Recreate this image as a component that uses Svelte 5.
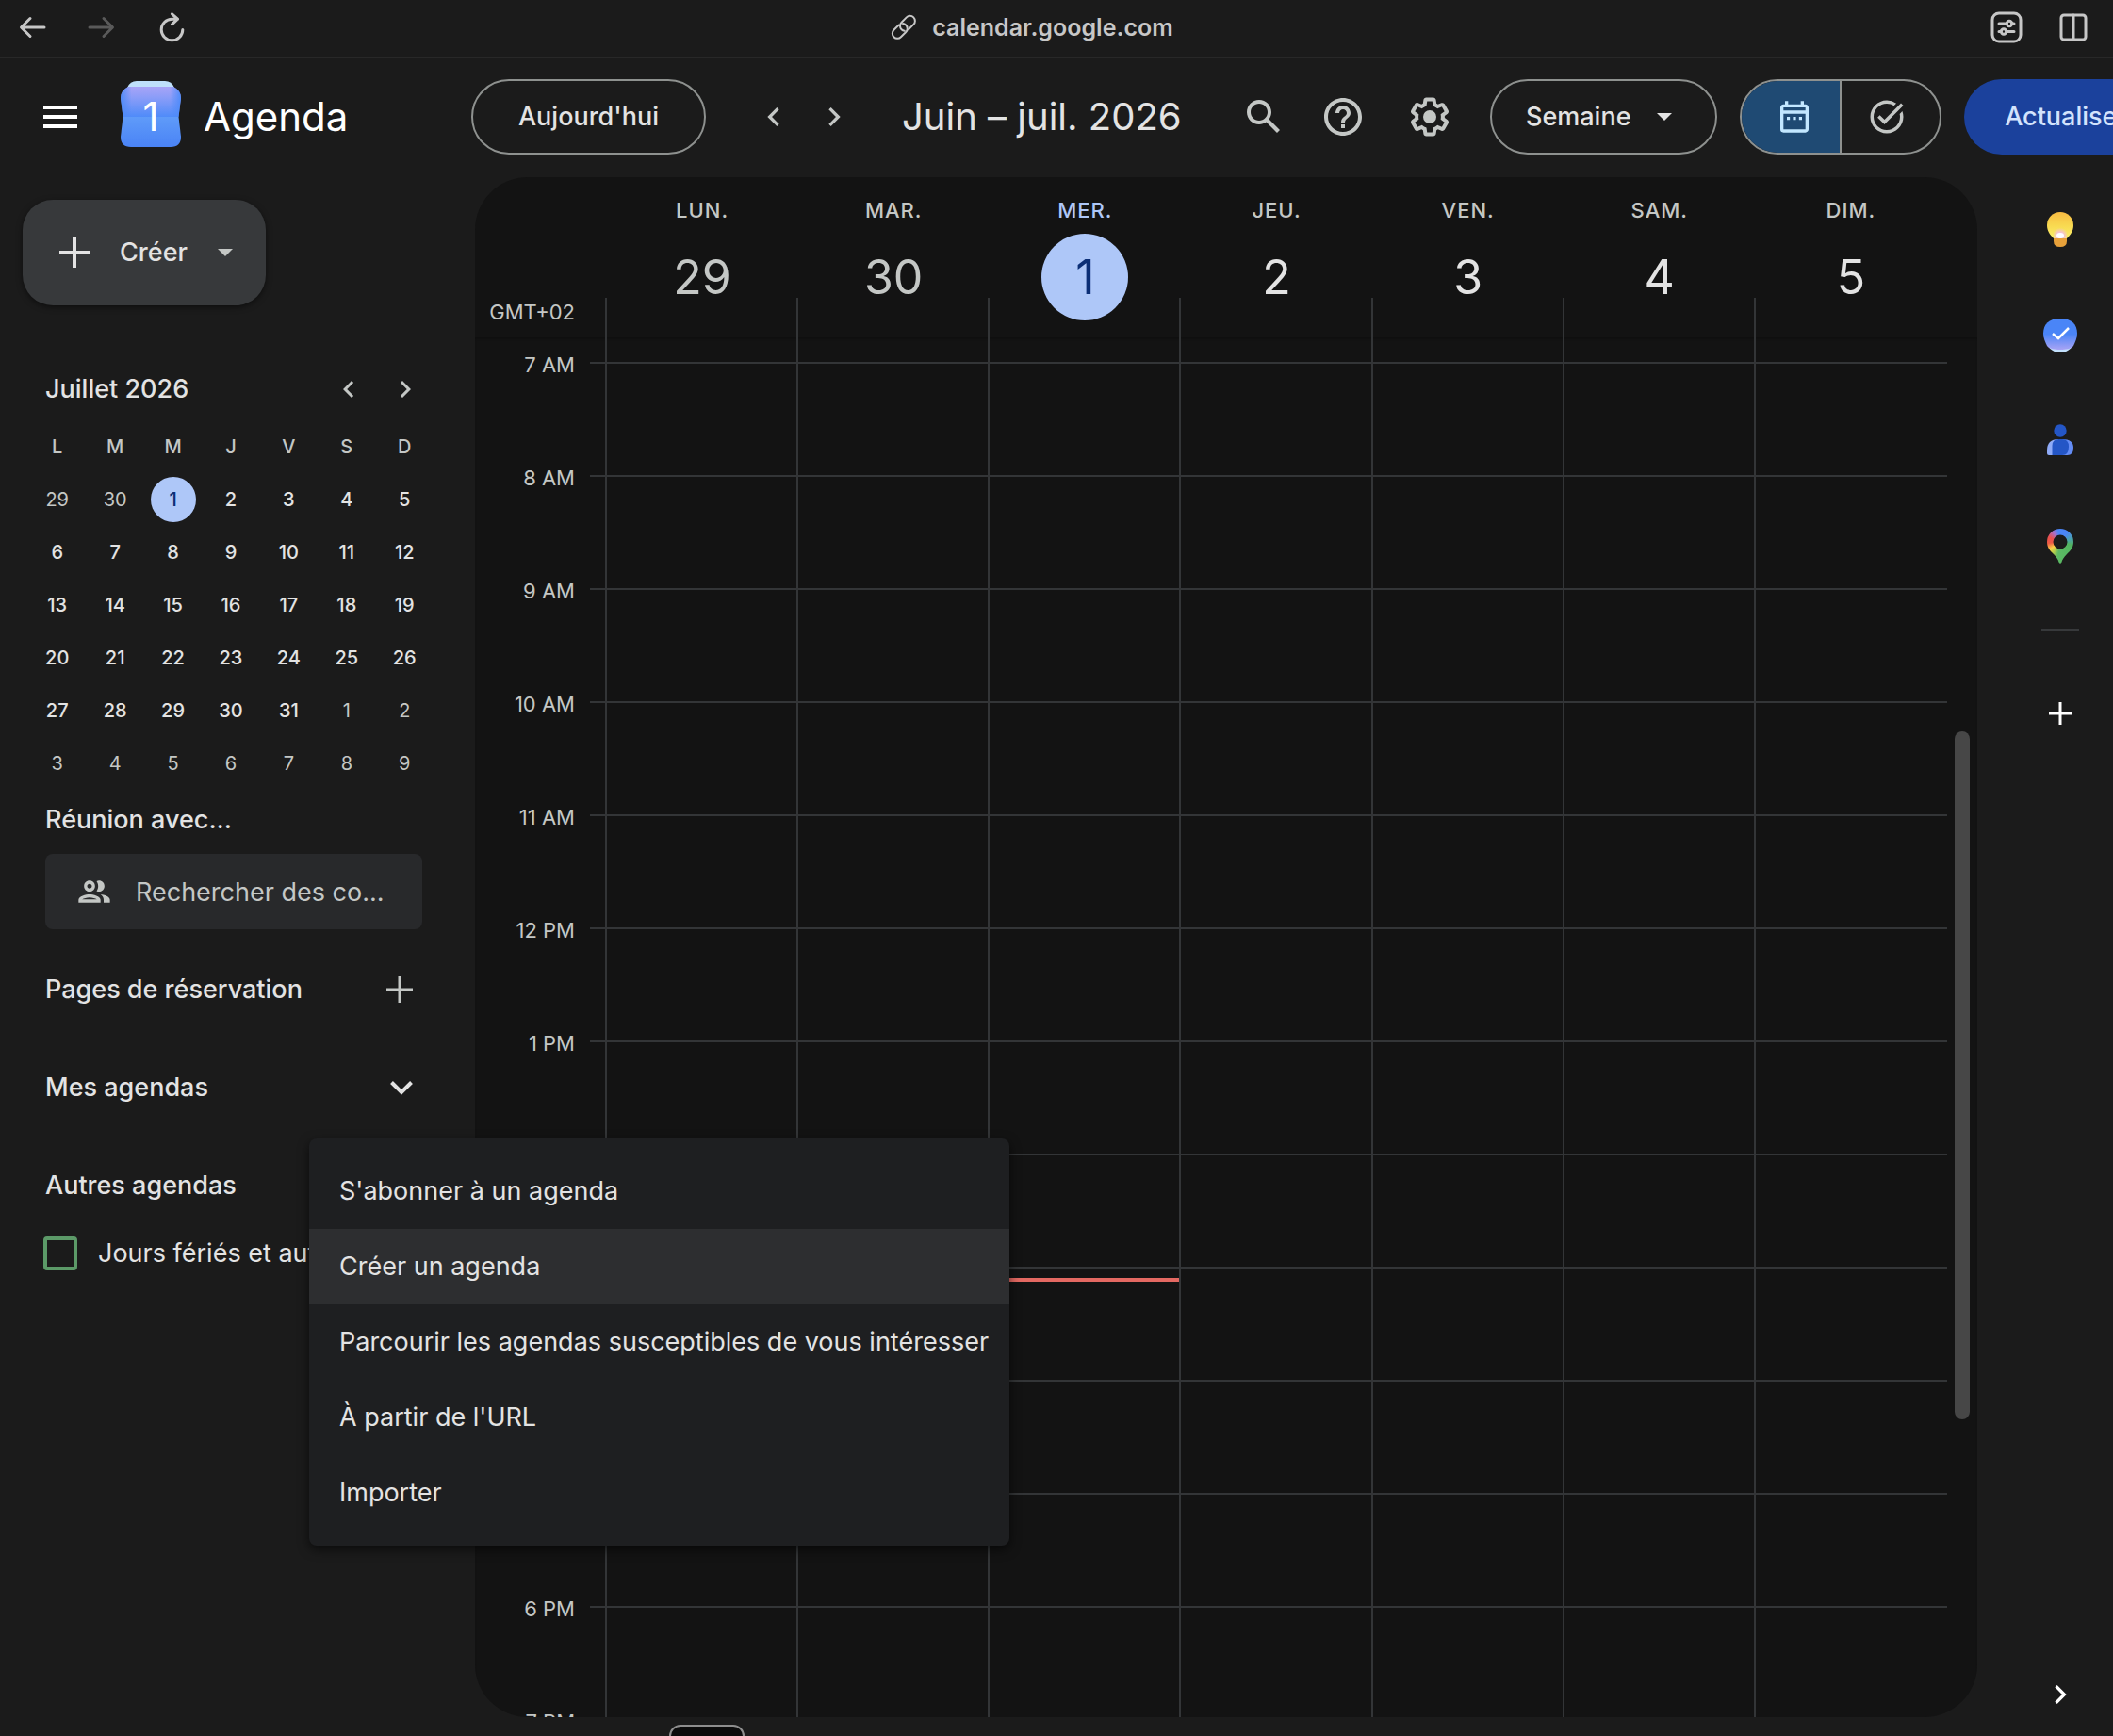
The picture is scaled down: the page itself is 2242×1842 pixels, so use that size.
<script>
  const days = [
    { name: 'LUN.', num: 29, past: true },
    { name: 'MAR.', num: 30, past: true },
    { name: 'MER.', num: 1, today: true },
    { name: 'JEU.', num: 2 },
    { name: 'VEN.', num: 3 },
    { name: 'SAM.', num: 4 },
    { name: 'DIM.', num: 5 }
  ];
  const hours = ['7 AM', '8 AM', '9 AM', '10 AM', '11 AM', '12 PM', '1 PM', '2 PM', '3 PM', '4 PM', '5 PM', '6 PM', '7 PM'];
  const letters = ['L', 'M', 'M', 'J', 'V', 'S', 'D'];
  // Six weeks starting on Monday 29 June 2026
  const weeks = Array.from({ length: 6 }, (_, w) =>
    Array.from({ length: 7 }, (_, d) => {
      const n = w * 7 + d - 1;
      if (n < 1) return { n: n + 30, out: true };
      if (n > 31) return { n: n - 31, out: true };
      return { n, out: false, today: n === 1 };
    })
  );
  const menu = [
    "S'abonner à un agenda",
    'Créer un agenda',
    'Parcourir les agendas susceptibles de vous intéresser',
    "À partir de l'URL",
    'Importer'
  ];
  let active = $state(1);
  let view = $state('Semaine');
  let holidays = $state(false);
</script>

<div class="app">
  <div class="browser">
    <div class="tools">
      <button aria-label="Page précédente"><svg width="32" height="32" viewBox="0 0 32 32"><path d="M29 16H5M14 6.5L4.500 16 14 25.500" /></svg></button>
      <button class="off" aria-label="Page suivante"><svg width="32" height="32" viewBox="0 0 32 32"><path d="M3 16h24M18 6.500L27.500 16 18 25.500" /></svg></button>
      <button aria-label="Recharger"><svg width="32" height="32" viewBox="0 0 32 32"><path d="M27.800 18.500A11.300 11.300 0 1 1 16.500 7.200h6M16.500 1.800l6 5.400-6 5.600" /></svg></button>
    </div>
    <div class="address">
      <svg width="28" height="28" viewBox="0 0 28 28"><g transform="rotate(-45 14 14)"><path d="M12 8.500H4.500a5.300 5.300 0 0 0 0 10.600h7.500a5.300 5.300 0 0 0 5.300-5.300 5.300 5.300 0 0 0-1.200-3.300" /><path d="M16 19.100h7.500a5.300 5.300 0 0 0 0-10.600H16a5.300 5.300 0 0 0-5.300 5.300 5.300 5.300 0 0 0 1.200 3.300" /></g></svg>
      <span>calendar.google.com</span>
    </div>
    <div class="tools end">
      <button aria-label="Réglages du site"><svg width="34" height="34" viewBox="0 0 34 34"><rect x="2" y="2" width="30" height="30" rx="7" /><path d="M9 13h8M23 13h2M9 21.500h2M17 21.500h8" /><circle cx="20" cy="13" r="2.700" /><circle cx="14" cy="21.500" r="2.700" /></svg></button>
      <button aria-label="Vue partagée"><svg width="34" height="34" viewBox="0 0 34 34"><rect x="3" y="4" width="26" height="26" rx="3" /><path d="M16 4v26" /></svg></button>
    </div>
  </div>

  <header>
    <div class="brand">
      <button class="burger" aria-label="Menu principal"><svg width="48" height="48" viewBox="0 0 24 24"><path fill="currentColor" d="M3 18h18v-2H3v2zm0-5h18v-2H3v2zm0-7v2h18V6H3z" /></svg></button>
      <div class="logo">
        <svg width="66" height="72" viewBox="0 0 66 72">
          <defs>
            <linearGradient id="lg-top" x1="0" y1="0" x2="0" y2="1"><stop offset="0" stop-color="#a9a4f7" /><stop offset=".35" stop-color="#8b9df8" /><stop offset="1" stop-color="#4f8bf9" /></linearGradient>
            <linearGradient id="lg-side" x1="0" y1="0" x2="1" y2="0"><stop offset="0" stop-color="#4f8bf9" /><stop offset=".18" stop-color="#4f8bf9" stop-opacity="0" /><stop offset=".82" stop-color="#4f8bf9" stop-opacity="0" /><stop offset="1" stop-color="#4f8bf9" /></linearGradient>
            <linearGradient id="lg-bot" x1="0" y1="0" x2="0" y2="1"><stop offset="0" stop-color="#5f9bf9" /><stop offset="1" stop-color="#4a83f6" /></linearGradient>
          </defs>
          <path fill="#bfe0fb" d="M18 1h30q7 0 10 7v4H8V8q3-7 10-7z" />
          <path fill="url(#lg-top)" d="M9 7h48q8 4 8 12L62.500 39h-59L1 19Q1 11 9 7z" />
          <path fill="url(#lg-side)" d="M9 7h48q8 4 8 12L62.500 39h-59L1 19Q1 11 9 7z" />
          <path fill="url(#lg-bot)" d="M3.500 39h59L65 60q0 11-11 11H12Q1 71 1 60z" />
        </svg>
        <span>1</span>
      </div>
      <span class="name">Agenda</span>
    </div>
    <button class="pill today">Aujourd'hui</button>
    <div class="nav">
      <button aria-label="Semaine précédente"><svg width="40" height="40" viewBox="0 0 24 24"><path fill="currentColor" d="M15.410 7.410L14 6l-6 6 6 6 1.410-1.410L10.830 12z" /></svg></button>
      <button aria-label="Semaine suivante"><svg width="40" height="40" viewBox="0 0 24 24"><path fill="currentColor" d="M10 6L8.590 7.410 13.170 12l-4.580 4.590L10 18l6-6z" /></svg></button>
    </div>
    <h1>Juin – juil. 2026</h1>
    <div class="icons">
      <button aria-label="Rechercher"><svg width="48" height="48" viewBox="0 0 24 24"><path fill="currentColor" d="M20.490 19l-5.730-5.730C15.530 12.200 16 10.910 16 9.500 16 5.910 13.090 3 9.500 3S3 5.910 3 9.500 5.910 16 9.500 16c1.410 0 2.700-.47 3.770-1.240L19 20.490 20.490 19zM5 9.500C5 7.010 7.010 5 9.500 5S14 7.010 14 9.500 11.990 14 9.500 14 5 11.990 5 9.500z" /></svg></button>
      <button aria-label="Aide"><svg width="48" height="48" viewBox="0 0 24 24"><path fill="currentColor" d="M11 18h2v-2h-2v2zm1-16C6.480 2 2 6.480 2 12s4.480 10 10 10 10-4.480 10-10S17.520 2 12 2zm0 18c-4.410 0-8-3.590-8-8s3.590-8 8-8 8 3.590 8 8-3.590 8-8 8zm0-14c-2.210 0-4 1.790-4 4h2c0-1.100.9-2 2-2s2 .9 2 2c0 2-3 1.750-3 5h2c0-2.250 3-2.500 3-5 0-2.210-1.790-4-4-4z" /></svg></button>
      <button class="gear" aria-label="Paramètres"><svg width="48" height="48" viewBox="0 0 24 24"><path fill="currentColor" d="M13.850 22.250h-3.700c-.74 0-1.360-.54-1.450-1.270l-.27-1.890c-.27-.14-.53-.29-.79-.46l-1.800.72c-.7.26-1.470-.03-1.810-.65L2.200 15.530c-.35-.66-.2-1.440.36-1.880l1.530-1.190c-.01-.15-.02-.3-.02-.46 0-.15.01-.31.020-.46l-1.520-1.190c-.59-.45-.74-1.260-.37-1.880l1.850-3.190c.34-.62 1.110-.9 1.790-.63l1.810.73c.26-.17.52-.32.780-.46l.27-1.910c.09-.7.710-1.250 1.440-1.250h3.700c.74 0 1.360.54 1.450 1.270l.27 1.890c.27.14.53.29.79.46l1.800-.72c.71-.26 1.480.03 1.820.65l1.840 3.180c.36.66.2 1.440-.36 1.880l-1.520 1.190c.01.15.020.3.020.46s-.01.31-.02.46l1.520 1.190c.56.45.72 1.230.37 1.860l-1.860 3.220c-.34.62-1.110.9-1.800.63l-1.800-.72c-.26.17-.52.32-.78.46l-.27 1.910c-.1.680-.72 1.220-1.460 1.220zm-3.230-2h2.760l.37-2.550.53-.22c.44-.18.88-.44 1.340-.78l.45-.34 2.380.96 1.380-2.400-2.030-1.580.07-.56c.03-.26.060-.51.060-.78s-.03-.53-.06-.78l-.07-.56 2.030-1.580-1.390-2.400-2.390.96-.45-.35c-.42-.32-.87-.58-1.330-.77l-.52-.22-.37-2.550h-2.760l-.37 2.550-.53.210c-.44.190-.88.440-1.340.79l-.45.330-2.380-.95-1.390 2.390 2.030 1.580-.07.56a7 7 0 0 0-.06.79c0 .26.020.53.060.78l.07.56-2.030 1.580 1.380 2.400 2.390-.96.45.35c.43.33.86.58 1.330.77l.53.220.38 2.550z" /><circle fill="currentColor" cx="12" cy="12" r="3.500" /></svg></button>
    </div>
    <div class="pill view">
      <select aria-label="Affichage" bind:value={view}>
        <option>Jour</option><option>Semaine</option><option>Mois</option>
      </select>
      <svg width="16" height="10" viewBox="0 0 16 10"><path fill="currentColor" d="M0 1h16L8 9z" /></svg>
    </div>
    <div class="pill switch">
      <button class="on" aria-label="Agenda"><svg width="40" height="40" viewBox="0 0 24 24"><path fill="currentColor" d="M19 4h-1V2h-2v2H8V2H6v2H5c-1.110 0-1.990.9-1.990 2L3 20a2 2 0 0 0 2 2h14c1.100 0 2-.9 2-2V6c0-1.100-.9-2-2-2zm0 16H5V10h14v10zm0-12H5V6h14v2z" /><path fill="currentColor" d="M7.200 12h1.900v1.900H7.200zM11.050 12h1.900v1.900h-1.900zM14.900 12h1.900v1.900h-1.900z" /></svg></button>
      <button class="tasks" aria-label="Tâches"><svg width="42" height="42" viewBox="0 0 24 24"><path fill="currentColor" d="M22 5.180L10.590 16.600l-4.240-4.240 1.410-1.410 2.830 2.830 10-10L22 5.180zm-2.210 5.040c.13.570.21 1.170.21 1.780 0 4.420-3.580 8-8 8s-8-3.580-8-8 3.580-8 8-8c1.580 0 3.040.46 4.280 1.250l1.440-1.440A9.900 9.900 0 0 0 12 2C6.480 2 2 6.480 2 12s4.480 10 10 10 10-4.480 10-10c0-1.190-.22-2.330-.6-3.390l-1.610 1.610z" /></svg></button>
    </div>
    <button class="upgrade">Actualiser</button>
  </header>

  <div class="body">
    <aside>
      <button class="create">
        <svg width="32" height="32" viewBox="0 0 32 32"><path fill="currentColor" d="M14 0h4v14h14v4H18v14h-4V18H0v-4h14z" /></svg>
        <span>Créer</span>
        <svg class="caret" width="16" height="10" viewBox="0 0 16 10"><path fill="currentColor" d="M0 1h16L8 9z" /></svg>
      </button>

      <section class="mini">
        <div class="row">
          <h2>Juillet 2026</h2>
          <div class="arrows">
            <button aria-label="Mois précédent"><svg width="36" height="36" viewBox="0 0 24 24"><path fill="currentColor" d="M15.410 7.410L14 6l-6 6 6 6 1.410-1.410L10.830 12z" /></svg></button>
            <button aria-label="Mois suivant"><svg width="36" height="36" viewBox="0 0 24 24"><path fill="currentColor" d="M10 6L8.590 7.410 13.170 12l-4.580 4.590L10 18l6-6z" /></svg></button>
          </div>
        </div>
        <table>
          <thead><tr>{#each letters as l}<th>{l}</th>{/each}</tr></thead>
          <tbody>
            {#each weeks as week}
              <tr>{#each week as d}<td><button class:out={d.out} class:now={d.today}>{d.n}</button></td>{/each}</tr>
            {/each}
          </tbody>
        </table>
      </section>

      <label class="meet" for="people">Réunion avec...</label>
      <div class="people">
        <svg width="40" height="40" viewBox="0 0 24 24"><path fill="currentColor" d="M9 12c1.930 0 3.500-1.570 3.500-3.500S10.930 5 9 5 5.500 6.570 5.500 8.500 7.070 12 9 12zm0-5c.83 0 1.500.67 1.500 1.500S9.830 10 9 10s-1.500-.67-1.500-1.500S8.170 7 9 7zm0 6.750c-2.340 0-7 1.170-7 3.500V19h14v-1.750c0-2.330-4.660-3.500-7-3.500zM4.340 17c.84-.58 2.870-1.250 4.660-1.250s3.820.67 4.660 1.250H4.340zm11.700-3.190c1.160.84 1.960 1.960 1.960 3.440V19h4v-1.750c0-2.020-3.500-3.170-5.960-3.440zM15 12c1.930 0 3.500-1.570 3.500-3.500S16.930 5 15 5c-.54 0-1.040.13-1.500.35.630.89 1 1.980 1 3.150s-.37 2.260-1 3.150c.46.220.96.350 1.500.350z" /></svg>
        <input id="people" type="text" placeholder="Rechercher des co..." />
      </div>

      <div class="row group">
        <h2>Pages de réservation</h2>
        <button class="dim" aria-label="Ajouter une page"><svg width="28" height="28" viewBox="0 0 28 28"><path fill="currentColor" d="M12.500 0h3v12.500H28v3H15.500V28h-3V15.500H0v-3h12.500z" /></svg></button>
      </div>
      <div class="row group">
        <h2>Mes agendas</h2>
        <button aria-label="Développer"><svg width="24" height="24" viewBox="0 0 24 24"><path d="M1.500 6.500L12 17 22.500 6.500" fill="none" stroke="currentColor" stroke-width="4" /></svg></button>
      </div>
      <div class="others">
        <div class="row group"><h2>Autres agendas</h2></div>
        <label class="check"><input type="checkbox" bind:checked={holidays} /><span>Jours fériés et autres fêtes</span></label>
        <div class="menu" role="menu">
          {#each menu as item, i}
            <button role="menuitem" class:active={active === i} onmouseenter={() => (active = i)}>{item}</button>
          {/each}
        </div>
      </div>
    </aside>

    <main>
      <div class="head">
        <div class="zone">GMT+02</div>
        {#each days as d}
          <div class="day" class:past={d.past} class:current={d.today}>
            <span class="dow">{d.name}</span>
            <button>{d.num}</button>
          </div>
        {/each}
      </div>
      <div class="scroll">
        <div class="grid">
          <div class="hours">
            {#each hours as h}<div><span>{h}</span></div>{/each}
          </div>
          {#each days as d}
            <div class="col">
              {#each hours as h}<div class="cell"></div>{/each}
              {#if d.today}<div class="nowline"></div>{/if}
            </div>
          {/each}
        </div>
      </div>
      <div class="thumb"></div>
    </main>

    <nav class="rail">
      <button aria-label="Keep"><svg width="40" height="40" viewBox="0 0 40 40">
        <defs>
          <linearGradient id="kp" x1="0" y1="0" x2="0" y2="1"><stop offset="0" stop-color="#f8bb42" /><stop offset=".5" stop-color="#f8d850" /><stop offset="1" stop-color="#faf06a" /></linearGradient>
          <radialGradient id="kg" cx=".5" cy=".8" r=".6"><stop offset="0" stop-color="#fff" /><stop offset=".4" stop-color="#f3bde0" /><stop offset="1" stop-color="#f3bde0" stop-opacity="0" /></radialGradient>
        </defs>
        <path fill="#e8a13a" d="M13 27h14v5q0 6-7 6t-7-6z" />
        <path fill="url(#kp)" d="M20 1a14 14 0 0 1 14 14c0 6-3 10-7 14H13C9 25 6 21 6 15A14 14 0 0 1 20 1z" />
        <path fill="url(#kg)" d="M13 15h14v14H13z" />
        <ellipse cx="20" cy="26" rx="4" ry="3" fill="#fff" />
      </svg></button>
      <button aria-label="Tasks"><svg width="40" height="40" viewBox="0 0 40 40">
        <defs><linearGradient id="tk" x1="0" y1="0" x2="0" y2="1"><stop offset=".5" stop-color="#4a85f7" /><stop offset="1" stop-color="#a9a4f5" /></linearGradient></defs>
        <path fill="#c2e0fc" d="M4 22h32c-1 10-7 16-16 16S5 32 4 22z" />
        <path fill="url(#tk)" d="M20 2c12 0 18 6 18 16 0 4-2 9-4 13-2 3-8 4-14 4S8 34 6 31C4 27 2 22 2 18 2 8 8 2 20 2z" />
        <path d="M12 18l6 5 11-11" fill="none" stroke="#fff" stroke-width="2.500" />
      </svg></button>
      <button aria-label="Contacts"><svg width="40" height="40" viewBox="0 0 40 40">
        <circle cx="20" cy="9" r="6.700" fill="#2456c6" />
        <path fill="#8fabf7" d="M6 30q0-12 12-12v17H8q-2 0-2-2z" />
        <path fill="#638cf5" d="M22 18q12 0 12 9t-8 8h-4z" />
        <path fill="#2456c6" d="M11.500 35V25q0-7 7-7h3.500q7 0 7 8 0 9-7 9z" />
      </svg></button>
      <button aria-label="Maps">
        <span class="pin"></span>
      </button>
      <hr />
      <button aria-label="Modules complémentaires"><svg width="24" height="24" viewBox="0 0 24 24"><path fill="#fff" d="M10.500 0h3v10.500H24v3H13.500V24h-3V13.500H0v-3h10.500z" /></svg></button>
      <button class="last" aria-label="Masquer le panneau"><svg width="40" height="40" viewBox="0 0 24 24"><path fill="#fff" d="M10 6L8.590 7.410 13.170 12l-4.580 4.590L10 18l6-6z" /></svg></button>
    </nav>
  </div>
  <div class="peek"></div>
</div>

<style>
  :global(body) { background: #1b1b1b; }
  :global(*) { box-sizing: border-box; }
  .app {
    position: relative;
    display: flex;
    flex-direction: column;
    height: 100vh;
    overflow: hidden;
    background: #1b1b1b;
    color: #e3e3e3;
    font-family: Inter, 'Open Sans', sans-serif;
    font-size: 27px;
    line-height: 32px;
  }
  button, input, select { font: inherit; color: inherit; background: none; border: 0; padding: 0; margin: 0; }
  button { display: flex; align-items: center; justify-content: center; flex-shrink: 0; cursor: pointer; }
  svg { display: block; flex-shrink: 0; }
  h1, h2 { margin: 0; font-weight: 500; font-size: 27px; }

  .browser {
    display: grid;
    grid-template-columns: 1fr auto 1fr;
    align-items: center;
    height: 62px;
    padding: 0 24px 2px 18px;
    border-bottom: 2px solid #282828;
    flex-shrink: 0;
    color: #c7c7c7;
  }
  .browser svg { fill: none; stroke: currentColor; stroke-width: 3; stroke-linecap: round; stroke-linejoin: round; }
  .browser .address svg { stroke-width: 2; overflow: visible; }
  .tools { display: flex; gap: 42px; }
  .tools.end { justify-content: flex-end; gap: 38px; }
  .off { color: #5a5a5a; }
  .address { display: flex; align-items: center; gap: 16px; font-weight: 600; font-size: 25px; margin-right: 46px; }

  header { display: flex; align-items: center; height: 126px; padding-bottom: 2px; flex-shrink: 0; overflow: hidden; }
  .brand { display: flex; align-items: center; width: 500px; flex-shrink: 0; padding-left: 40px; color: #fff; }
  .logo { display: grid; place-items: center; margin: 0 23px 0 39px; }
  .logo > * { grid-area: 1 / 1; }
  .logo svg { margin-bottom: 6px; }
  .logo span { font-size: 42px; line-height: 48px; }
  .name { font-size: 42px; line-height: 48px; }
  .pill { height: 80px; border: 2px solid #8e918f; border-radius: 40px; font-weight: 500; flex-shrink: 0; }
  .today { width: 249px; }
  .nav { display: flex; margin-left: 40px; }
  .nav button { width: 64px; height: 64px; color: #c4c7c5; }
  h1 { width: 344px; margin-left: 40px; font-weight: 400; font-size: 40px; line-height: 48px; white-space: nowrap; flex-shrink: 0; }
  .icons { display: flex; gap: 4px; color: #c4c7c5; }
  .icons button { width: 80px; height: 80px; }
  .icons .gear { margin-left: 8px; }
  .view { display: flex; align-items: center; width: 241px; margin-left: 24px; padding: 0 46px 0 36px; }
  .view select { appearance: none; flex: 1; min-width: 0; height: 76px; outline: none; }
  .switch { display: flex; width: 214px; margin-left: 24px; overflow: hidden; }
  .switch button { flex: 1; color: #c4c7c5; }
  .switch .on { padding-left: 8px; background: #1f4a73; color: #c2e7ff; border-right: 2px solid #8e918f; }
  .switch .tasks { padding-right: 8px; }
  .upgrade { height: 80px; width: 216px; margin-left: 24px; border-radius: 40px; background: #1b419c; color: #d3e3fd; font-weight: 500; }

  .body { display: flex; flex: 1; min-height: 0; padding-bottom: 20px; }
  aside { position: relative; z-index: 2; width: 504px; flex-shrink: 0; padding-top: 24px; }
  .create { width: 258px; height: 112px; margin-left: 24px; padding-left: 4px; gap: 32px; border-radius: 32px; background: #37393b; font-weight: 500; box-shadow: 0 2px 6px rgba(0, 0, 0, .5); }
  .create .caret { color: #c4c7c5; }
  .row { display: flex; align-items: center; justify-content: space-between; padding-left: 48px; padding-right: 46px; }
  .mini { margin-top: 61px; }
  .mini .row { height: 56px; }
  .arrows { display: flex; gap: 4px; color: #c4c7c5; }
  .arrows button { width: 56px; height: 56px; }
  table { width: 430px; margin-left: 30px; margin-top: 5px; border-collapse: collapse; table-layout: fixed; }
  th, td { height: 56px; padding: 0; text-align: center; font-size: 20px; line-height: 24px; font-weight: 500; }
  th { color: #c4c7c5; }
  td button { width: 48px; height: 48px; margin: 0 auto; border-radius: 50%; }
  .out { color: #c4c7c5; font-weight: 400; }
  .now { background: #aec7f8; color: #0b2e76; }
  .meet { display: block; margin: 16px 0 0 48px; font-weight: 500; }
  .people { display: flex; align-items: center; gap: 24px; width: 400px; height: 80px; margin: 20px 0 28px 48px; padding: 0 32px; border-radius: 8px; background: #28292b; color: #c4c7c5; }
  .people input { flex: 1; min-width: 0; height: 80px; outline: none; }
  .people input::placeholder { color: #c4c7c5; opacity: 1; }
  .group { height: 72px; margin-bottom: 32px; padding-right: 66px; }
  .dim { color: #c4c7c5; }
  .others { position: relative; }
  .others .group { margin-bottom: 0; }
  .check { display: flex; align-items: center; gap: 22px; height: 72px; padding-left: 46px; white-space: nowrap; overflow: hidden; }
  .check input { appearance: none; width: 36px; height: 36px; border: 4px solid #5c9a68; border-radius: 4px; flex-shrink: 0; }
  .check input:checked { background: #5c9a68; }
  .menu { position: absolute; left: 328px; top: -14px; padding: 16px 0; border-radius: 8px; background: #1e1f21; box-shadow: 0 4px 12px rgba(0, 0, 0, .6); }
  .menu button { width: 100%; height: 80px; padding: 0 22px 0 32px; justify-content: flex-start; white-space: nowrap; }
  .menu .active { background: #2d2e30; }

  main { position: relative; display: flex; flex-direction: column; flex: 1; min-width: 0; border-radius: 56px; background: #131313; overflow: hidden; }
  .head, .grid { display: grid; grid-template-columns: 138px repeat(7, minmax(0, 1fr)); margin-right: 34px; }
  .head { height: 170px; flex-shrink: 0; }
  .zone { align-self: end; padding: 0 32px 15px 0; text-align: right; font-size: 22px; line-height: 24px; color: #c4c7c5; }
  .day { display: flex; flex-direction: column; align-items: center; padding: 23px 0 0 3px; background: linear-gradient(#333537, #333537) left bottom / 2px 42px no-repeat; }
  .dow { font-size: 22px; line-height: 24px; letter-spacing: 1px; font-weight: 500; color: #c4c7c5; }
  .day button { width: 92px; height: 92px; margin-top: 13px; border-radius: 50%; font-size: 50px; line-height: 56px; }
  .past button { color: #c4c7c5; }
  .current .dow { color: #aec7f8; }
  .current button { background: #aec7f8; color: #0b2e76; }
  .scroll { flex: 1; min-height: 0; overflow: hidden; box-shadow: inset 0 2px 2px rgba(0, 0, 0, .2); }
  .hours { padding-top: 26px; background: repeating-linear-gradient(#333537 0 2px, transparent 2px 120px) right 26px / 16px auto no-repeat; }
  .hours div { display: flow-root; height: 120px; padding-right: 32px; text-align: right; font-size: 22px; line-height: 24px; color: #c4c7c5; }
  .hours span { display: block; margin-top: -9px; }
  .col { position: relative; border-left: 2px solid #333537; padding-top: 26px; }
  .cell { height: 120px; border-top: 2px solid #333537; }
  .col:last-child .cell { margin-right: -2px; }
  .nowline { position: absolute; left: 0; right: 0; top: 998px; height: 4px; background: #e46962; }
  .thumb { position: absolute; right: 8px; top: 36%; width: 16px; height: 730px; border-radius: 8px; background: #474747; }

  .rail { display: flex; flex-direction: column; align-items: center; width: 112px; margin-left: 32px; flex-shrink: 0; }
  .rail button { width: 80px; height: 80px; margin: 16px 0; }
  .rail hr { width: 40px; margin: 31px 0 32px; border: 0; border-top: 2px solid #37393b; }
  .rail .last { margin-top: auto; margin-bottom: -16px; }
  .pin {
    width: 40px;
    height: 40px;
    clip-path: path(evenodd, 'M20 1a14 14 0 0 1 14 14c0 6-3 9-7 13-3 3-5 6-5.500 8.500q-1.500 2.500-3 0C18 34 16 31 13 28 9 24 6 21 6 15A14 14 0 0 1 20 1zM20 7.500a7.500 7.500 0 1 0 0 15 7.500 7.500 0 1 0 0-15z');
    background: conic-gradient(from 0deg at 50% 38%, #4a85f7 0deg, #4a85f7 35deg, #4aa0b8 70deg, #52b45f 105deg, #5cba64 190deg, #b9cf4a 215deg, #fbd147 235deg, #ee5a45 265deg, #e8504f 295deg, #a86fc9 325deg, #4a85f7 350deg);
  }
  .peek { position: absolute; left: 710px; bottom: -40px; width: 80px; height: 52px; border: 2px solid #8e8e8e; border-radius: 12px; background: #0c0c0c; }
</style>
